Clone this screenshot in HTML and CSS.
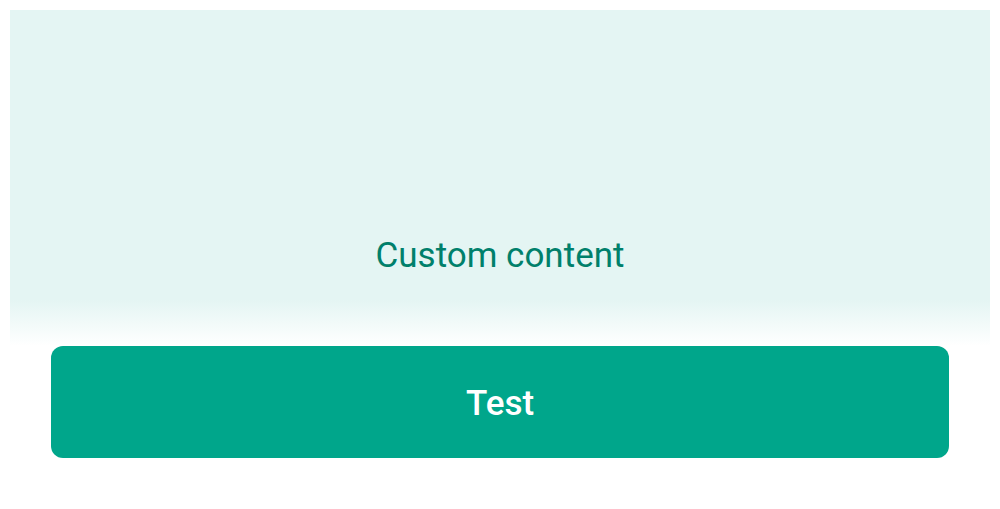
FILE: index.html
```html
<!DOCTYPE html>
<html>
<head>
<meta charset="utf-8">
<link rel="stylesheet" href="styles.css">
</head>
<body>
<div class="wrap">
  <div class="panel">
    <div class="content">Custom content</div>
  </div>
  <div class="actions">
    <button class="btn">Test</button>
  </div>
</div>
</body>
</html>
```
FILE: styles.css
```css
html, body {
  margin: 0;
  padding: 0;
  background: #ffffff;
  font-family: Roboto, "Noto Sans", sans-serif;
}
.wrap {
  padding: 10px 10px 0;
}
.panel {
  height: 336px;
  display: flex;
  flex-direction: column;
  justify-content: flex-end;
  align-items: center;
  padding-bottom: 70px;
  box-sizing: border-box;
  background: linear-gradient(to bottom, #e4f5f3 0, #e4f5f3 calc(100% - 46px), #ffffff 100%);
}
.content {
  font-size: 35px;
  line-height: 40px;
  color: #00806b;
}
.actions {
  padding: 0 41px;
}
.btn {
  display: block;
  width: 100%;
  height: 112px;
  border: none;
  border-radius: 12px;
  background: #00a68b;
  color: #ffffff;
  font-family: Roboto, "Noto Sans", sans-serif;
  font-size: 35px;
  font-weight: 500;
  padding: 2px 0 0;
}
```
